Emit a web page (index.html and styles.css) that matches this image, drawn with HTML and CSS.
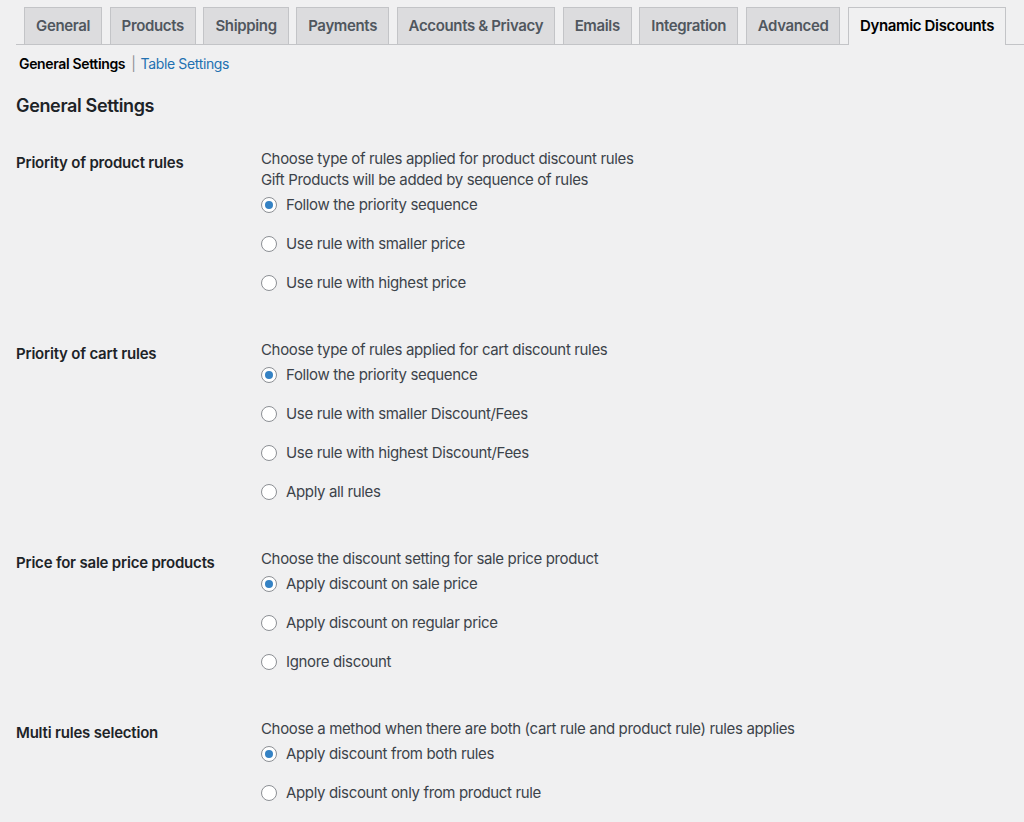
FILE: index.html
```html
<!DOCTYPE html>
<html lang="en">
<head>
    <meta charset="UTF-8">
    <meta name="viewport" content="width=device-width, initial-scale=1.0">
    <title>Dynamic Discounts - Settings</title>
    <link rel="stylesheet" href="styles.css">
</head>
<body>

    <div class="wrap">
        <nav class="nav-tabs">
            <a class="tab" href="#">General</a>
            <a class="tab" href="#">Products</a>
            <a class="tab" href="#">Shipping</a>
            <a class="tab" href="#">Payments</a>
            <a class="tab" href="#">Accounts &amp; Privacy</a>
            <a class="tab" href="#">Emails</a>
            <a class="tab" href="#">Integration</a>
            <a class="tab" href="#">Advanced</a>
            <a class="tab tab-active" href="#">Dynamic Discounts</a>
        </nav>

        <div class="subnav">
            <span class="current">General Settings</span>
            <span class="sep">|</span>
            <a href="#">Table Settings</a>
        </div>

        <h2>General Settings</h2>

        <div class="form-row">
            <div class="row-label">Priority of product rules</div>
            <div class="row-field">
                <p class="desc">Choose type of rules applied for product discount rules</p>
                <p class="desc">Gift Products will be added by sequence of rules</p>
                <div class="choices">
                    <label><input type="radio" name="product_rules" checked> Follow the priority sequence</label>
                    <label><input type="radio" name="product_rules"> Use rule with smaller price</label>
                    <label><input type="radio" name="product_rules"> Use rule with highest price</label>
                </div>
            </div>
        </div>

        <div class="form-row">
            <div class="row-label">Priority of cart rules</div>
            <div class="row-field">
                <p class="desc">Choose type of rules applied for cart discount rules</p>
                <div class="choices">
                    <label><input type="radio" name="cart_rules" checked> Follow the priority sequence</label>
                    <label><input type="radio" name="cart_rules"> Use rule with smaller Discount/Fees</label>
                    <label><input type="radio" name="cart_rules"> Use rule with highest Discount/Fees</label>
                    <label><input type="radio" name="cart_rules"> Apply all rules</label>
                </div>
            </div>
        </div>

        <div class="form-row">
            <div class="row-label">Price for sale price products</div>
            <div class="row-field">
                <p class="desc">Choose the discount setting for sale price product</p>
                <div class="choices">
                    <label><input type="radio" name="sale_price" checked> Apply discount on sale price</label>
                    <label><input type="radio" name="sale_price"> Apply discount on regular price</label>
                    <label><input type="radio" name="sale_price"> Ignore discount</label>
                </div>
            </div>
        </div>

        <div class="form-row">
            <div class="row-label">Multi rules selection</div>
            <div class="row-field">
                <p class="desc">Choose a method when there are both (cart rule and product rule) rules applies</p>
                <div class="choices">
                    <label><input type="radio" name="multi_rules" checked> Apply discount from both rules</label>
                    <label><input type="radio" name="multi_rules"> Apply discount only from product rule</label>
                </div>
            </div>
        </div>
    </div>

</body>
</html>
```

FILE: styles.css
```css
body {
    margin: 0;
    background: #f0f0f1;
    font-family: 'Inter', 'Helvetica', sans-serif;
    color: #3c434a;
    font-size: 15px;
    letter-spacing: -0.35px;
}

.wrap {
    padding-left: 16px;
}

.nav-tabs {
    display: flex;
    gap: 7.5px;
    padding: 7px 0 0 8px;
    border-bottom: 1px solid #c3c4c7;
}

.tab {
    display: block;
    height: 36px;
    line-height: 36px;
    padding: 0 11px;
    border: 1px solid #c3c4c7;
    border-bottom: none;
    background: #dcdcde;
    color: #50575e;
    font-size: 15px;
    font-weight: 600;
    text-decoration: none;
    white-space: nowrap;
}

.tab-active {
    background: #f0f0f1;
    color: #000;
    margin-bottom: -1px;
    height: 37px;
}

.subnav {
    margin-top: 9px;
    padding-left: 3px;
    font-size: 14px;
    line-height: 20px;
    display: flex;
    gap: 6px;
}

.subnav .current {
    font-weight: 600;
    color: #000;
}

.subnav .sep {
    color: #8c8f94;
}

.subnav a {
    color: #2271b1;
    text-decoration: none;
    margin-left: -1px;
}

h2 {
    margin: 20px 0 30px;
    font-size: 18px;
    line-height: 24px;
    font-weight: 600;
    color: #1d2327;
}

.form-row {
    display: grid;
    grid-template-columns: 245px 1fr;
    padding-bottom: 46px;
}

.row-label {
    margin-top: 4px;
    line-height: 21px;
    font-weight: 600;
    color: #1d2327;
    letter-spacing: -0.2px;
}

.desc {
    margin: 0;
    line-height: 21px;
}

.choices {
    display: flex;
    flex-direction: column;
    gap: 18px;
    margin-top: 4px;
}

.choices label {
    display: flex;
    align-items: center;
    gap: 9px;
    line-height: 21px;
}

input[type="radio"] {
    appearance: none;
    -webkit-appearance: none;
    width: 16px;
    height: 16px;
    margin: 0;
    border: 1px solid #8c8f94;
    border-radius: 50%;
    background: #fff;
    display: grid;
    place-items: center;
}

input[type="radio"]:checked::before {
    content: "";
    width: 8px;
    height: 8px;
    border-radius: 50%;
    background: #3582c4;
}
```
